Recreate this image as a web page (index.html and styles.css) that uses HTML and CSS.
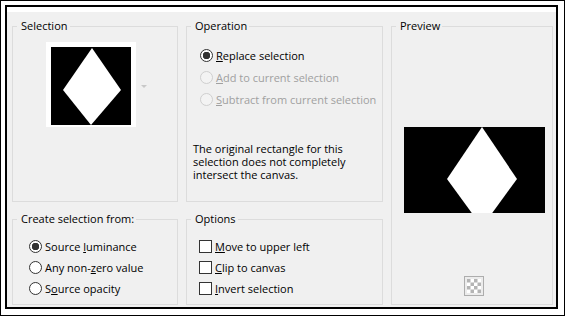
FILE: index.html
```html
<html>
<head>
  <title>Selection from mask</title>
  <link rel="stylesheet" href="styles.css">
</head>
<body>
  <div class="window">
    <div class="dialog">
      <div class="panels">

        <fieldset class="group sel">
          <legend>Selection</legend>
          <div class="thumb-row">
            <div class="thumb">
              <svg width="80" height="78" viewBox="0 0 80 78">
                <rect width="80" height="78" fill="#000"/>
                <polygon points="41,1 70,43 40,78 12,43" fill="#fff"/>
              </svg>
            </div>
            <span class="drop"></span>
          </div>
        </fieldset>

        <fieldset class="group op">
          <legend>Operation</legend>
          <div class="choices">
            <label class="choice"><input type="radio" name="op" checked><span><u>R</u>eplace selection</span></label>
            <label class="choice off"><input type="radio" name="op" disabled><span><u>A</u>dd to current selection</span></label>
            <label class="choice off"><input type="radio" name="op" disabled><span><u>S</u>ubtract from current selection</span></label>
          </div>
          <p class="note">The original rectangle for this<br>selection does not completely<br>intersect the canvas.</p>
        </fieldset>

        <fieldset class="group preview">
          <legend>Preview</legend>
          <div class="preview-body">
            <svg class="shot" width="141" height="86" viewBox="0 0 141 86">
              <rect width="141" height="86" fill="#000"/>
              <polygon points="78,0 113,52 78,100 43,52" fill="#fff"/>
            </svg>
            <svg class="checker" width="20" height="20" viewBox="0 0 20 20">
              <defs>
                <pattern id="chk" x="3" y="3" width="7" height="7" patternUnits="userSpaceOnUse">
                  <rect width="7" height="7" fill="#fff"/>
                  <rect width="3.5" height="3.5" fill="#b4b4b4"/>
                  <rect x="3.5" y="3.5" width="3.5" height="3.5" fill="#b4b4b4"/>
                </pattern>
              </defs>
              <rect x="0.5" y="0.5" width="19" height="19" fill="#ececec" stroke="#adadad"/>
              <rect x="3" y="3" width="14" height="14" fill="url(#chk)"/>
            </svg>
          </div>
        </fieldset>

        <fieldset class="group source">
          <legend>Create selection from:</legend>
          <div class="choices tight">
            <label class="choice"><input type="radio" name="src" checked><span>Source <u>l</u>uminance</span></label>
            <label class="choice"><input type="radio" name="src"><span>Any non-<u>z</u>ero value</span></label>
            <label class="choice"><input type="radio" name="src"><span>S<u>o</u>urce opacity</span></label>
          </div>
        </fieldset>

        <fieldset class="group options">
          <legend>Options</legend>
          <div class="choices tight">
            <label class="choice"><input type="checkbox"><span><u>M</u>ove to upper left</span></label>
            <label class="choice"><input type="checkbox"><span><u>C</u>lip to canvas</span></label>
            <label class="choice"><input type="checkbox"><span><u>I</u>nvert selection</span></label>
          </div>
        </fieldset>

      </div>
    </div>
  </div>
</body>
</html>
```

FILE: styles.css
```css
body {
  margin: 0;
  font-family: "Open Sans", "Noto Sans", sans-serif;
  font-size: 11px;
  color: #000;
}

.window {
  width: 565px;
  height: 316px;
  box-sizing: border-box;
  border: 1px solid #000;
  background-color: #fff;
  padding: 4px 6px 6px 4px;
}

.dialog {
  height: 100%;
  box-sizing: border-box;
  border: 2px solid #000;
  background-color: #f0f0f0;
  box-shadow: inset 0 5px 0 #fff;
}

.panels {
  display: grid;
  grid-template-columns: 166px 197px 162px;
  grid-template-rows: 183px 93px;
  column-gap: 8px;
  row-gap: 10px;
  padding: 12px 0 0 5px;
}

.group {
  margin: 0;
  padding: 0;
  min-width: 0;
  border: 1px solid #dcdcdc;
}

.group legend {
  margin-left: 4px;
  padding: 0 2px 0 4px;
  line-height: 14px;
}

.preview {
  grid-column: 3;
  grid-row: 1 / span 2;
}

/* selection thumbnail */
.thumb-row {
  display: flex;
  align-items: center;
  padding: 9px 0 0 33px;
}

.thumb {
  background-color: #fff;
  padding: 5px 5px 2px 5px;
  line-height: 0;
}

.drop {
  margin-left: 5px;
  margin-top: 3px;
  border-left: 3px solid transparent;
  border-right: 3px solid transparent;
  border-top: 3px solid #c8c8c8;
}

/* radio / checkbox lists */
.choices {
  padding: 11px 0 0 13px;
}

.choices.tight {
  padding: 10px 0 0 16px;
}

.options .choices.tight {
  padding-left: 12px;
}

.choice {
  display: flex;
  align-items: center;
  gap: 3px;
  height: 22px;
}

.tight .choice {
  height: 21px;
}

.choice input {
  appearance: none;
  margin: 0;
  width: 13px;
  height: 13px;
  box-sizing: border-box;
  border: 1px solid #333;
  background-color: #fff;
}

.choice input[type="radio"] {
  border-radius: 50%;
}

.choice input[type="radio"]:checked {
  background: radial-gradient(circle, #333 0 3.5px, #fff 4px);
}

.choice.off {
  color: #a0a0a0;
}

.choice.off input {
  border-color: #cfcfcf;
  background-color: #f3f3f3;
}

.note {
  margin: 32px 0 0 6px;
  line-height: 13px;
}

/* preview */
.preview-body {
  display: flex;
  flex-direction: column;
  align-items: flex-start;
  padding: 94px 0 0 12px;
}

.checker {
  margin: 63px 0 0 60px;
}
```
